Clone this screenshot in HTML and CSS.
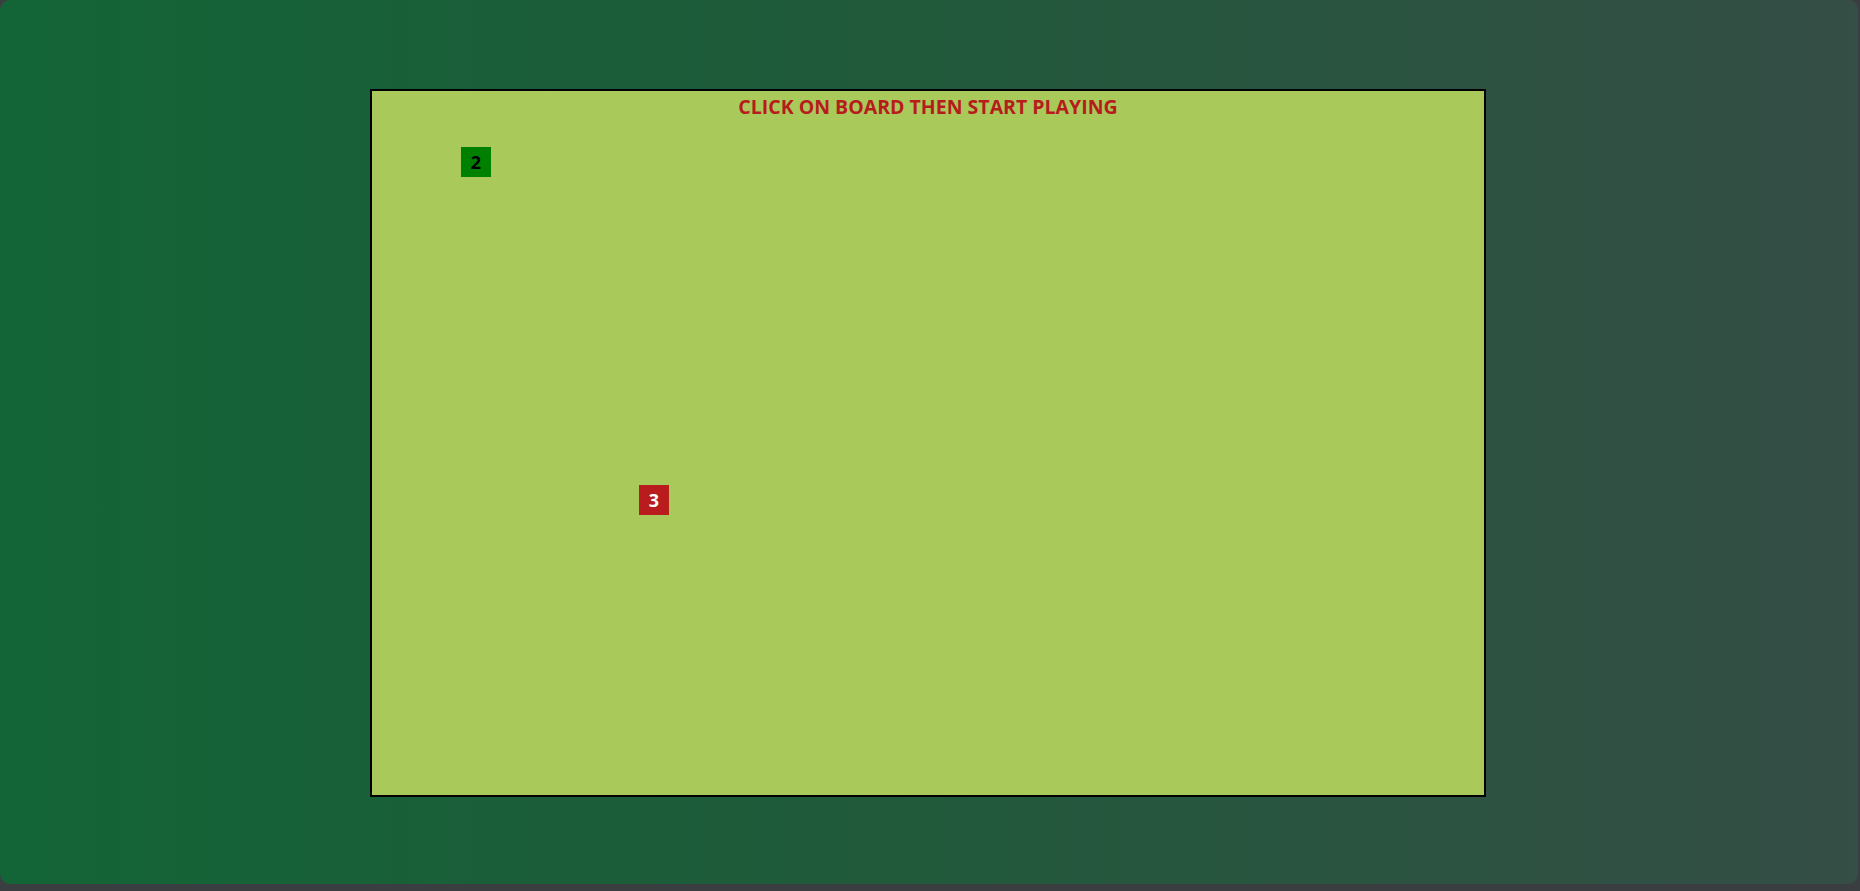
FILE: index.html
```html
<!DOCTYPE html>
<html>
<head>
<meta charset="utf-8">
<link rel="stylesheet" href="styles.css">
</head>
<body>
<div class="app">
  <div class="board">
    <div class="title">CLICK ON BOARD THEN START PLAYING</div>
    <div class="cell food" style="left:89px;top:56px">2</div>
    <div class="cell snake" style="left:267px;top:394px">3</div>
  </div>
</div>
</body>
</html>
```
FILE: styles.css
```css
html, body {
  margin: 0;
  padding: 0;
  height: 100%;
}
body {
  background: #3b3e40;
  font-family: "Open Sans", "Noto Sans", sans-serif;
}
.app {
  box-sizing: border-box;
  width: 1858px;
  height: 884px;
  border-radius: 10px;
  background: linear-gradient(to right, #136537, #1f5a3a 45%, #354e46);
  padding: 89px 372px 87px 370px;
}
.board {
  position: relative;
  box-sizing: border-box;
  width: 1116px;
  height: 708px;
  border: 2px solid #000;
  background: #a9c95b;
}
.title {
  text-align: center;
  color: #b71c1c;
  font-weight: 700;
  font-size: 19.5px;
  line-height: 24px;
  padding-top: 4px;
}
.cell {
  position: absolute;
  width: 30px;
  height: 30px;
  display: flex;
  align-items: center;
  justify-content: center;
  font-weight: 700;
  font-size: 18px;
}
.food {
  background: #008000;
  color: #000;
}
.snake {
  background: #b91c1c;
  color: #fff;
}
```
